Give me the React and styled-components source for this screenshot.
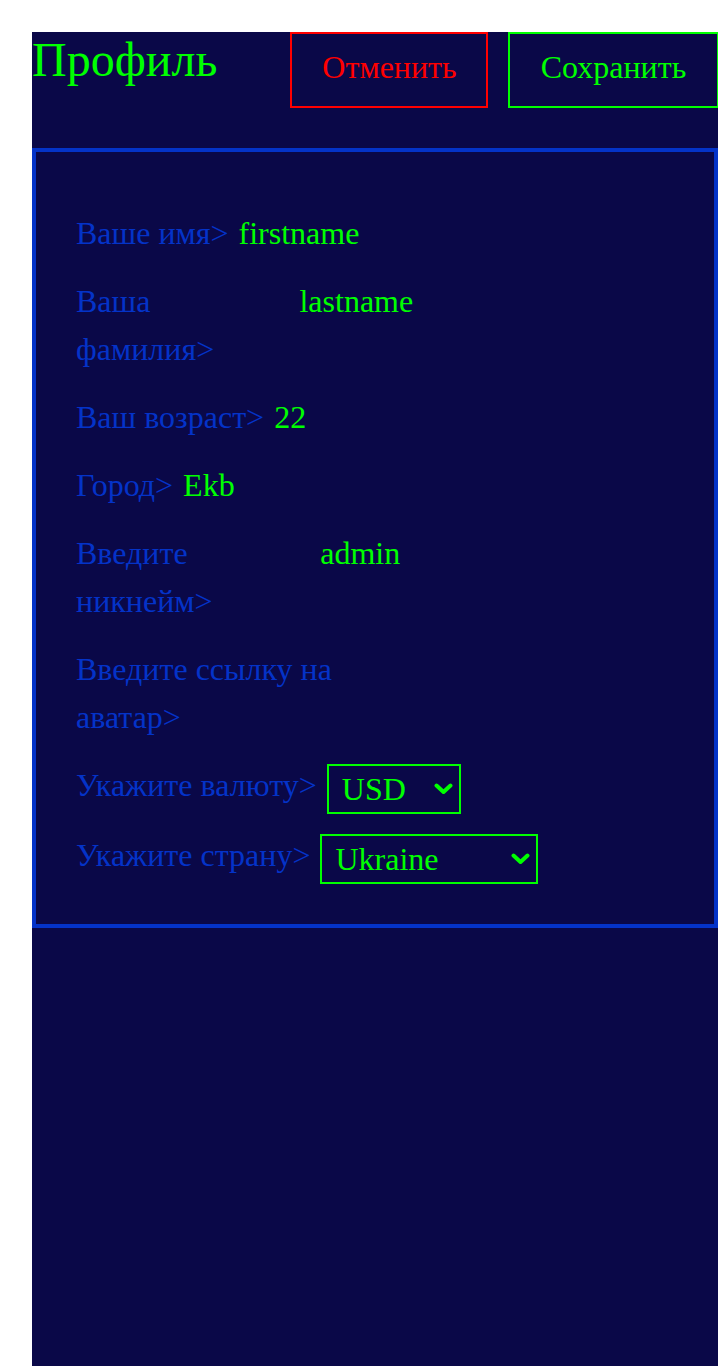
import React from "react"
import styled, { createGlobalStyle } from "styled-components"

const GlobalStyle = createGlobalStyle`
  html, body {
    margin: 0;
    padding: 0;
    background: #ffffff;
  }
  body {
    font-family: "Liberation Serif", "Times New Roman", serif;
  }
`;

const Page = styled.div`
  margin: 32px 0 0 32px;
  width: calc(100% - 32px);
  min-height: calc(100vh - 32px);
  background: #0a0848;
  box-sizing: border-box;
`;

const Header = styled.header`
  display: flex;
  align-items: flex-start;
  height: 116px;
`;

const Title = styled.h1`
  margin: 0 73px 0 0;
  font-size: 48px;
  font-weight: normal;
  color: #00ff00;
`;

const Button = styled.button`
  margin-right: 20px;
  padding: 15px 29px 21px 30px;
  font-family: inherit;
  font-size: 32px;
  line-height: 36px;
  background: transparent;
  color: ${p => p.$color};
  border: 2px solid ${p => p.$color};
  cursor: pointer;
  &:last-child {
    margin-right: 0;
    padding: 15px 31px 21px;
  }
`;

const Panel = styled.form`
  display: flex;
  flex-direction: column;
  gap: 20px;
  padding: 57px 40px 43px;
  border: 4px solid #0433c8;
  box-sizing: border-box;
`;

const Row = styled.div`
  display: flex;
  align-items: flex-start;
  gap: 10px;
  font-size: 32px;
  line-height: 48px;
`;

const Label = styled.label`
  flex: 0 1 auto;
  color: #0433c8;
`;

const Field = styled.input`
  flex: 0 1 auto;
  width: 387px;
  min-width: 0;
  padding: 0;
  border: none;
  outline: none;
  background: transparent;
  font-family: inherit;
  font-size: 32px;
  line-height: 48px;
  height: 48px;
  color: #00ff00;
`;

const SelectWrap = styled.div`
  position: relative;
  flex: 0 0 auto;
  margin: 3px 0 -3px;
  width: ${p => p.$width}px;
  height: 50px;
`;

const Select = styled.select`
  appearance: none;
  width: 100%;
  height: 100%;
  padding: 0 32px 0 13px;
  border: 2px solid #00ff00;
  border-radius: 0;
  background: #0a0848;
  color: #00ff00;
  font-family: inherit;
  font-size: 32px;
  outline: none;
`;

const Chevron = styled.svg`
  position: absolute;
  right: 8px;
  top: 19px;
  width: 19px;
  height: 12px;
  pointer-events: none;
`;

const fields = [
  { label: "Ваше имя>", value: "firstname" },
  { label: "Ваша фамилия>", value: "lastname" },
  { label: "Ваш возраст>", value: "22" },
  { label: "Город>", value: "Ekb" },
  { label: "Введите никнейм>", value: "admin" },
  { label: "Введите ссылку на аватар>", value: "" },
];

function Dropdown({ width, value, options }) {
  return (
    <SelectWrap $width={width}>
      <Select defaultValue={value}>
        {options.map(o => <option key={o}>{o}</option>)}
      </Select>
      <Chevron viewBox="0 0 19 12">
        <path d="M2.5 2.5 L9.5 9 L16.5 2.5" fill="none" stroke="#00ff00" strokeWidth="4" strokeLinecap="round" strokeLinejoin="round" />
      </Chevron>
    </SelectWrap>
  )
}

export default function App() {
  return (
    <>
      <GlobalStyle />
      <Page>
        <Header>
          <Title>Профиль</Title>
          <Button type="button" $color="#ff0000">Отменить</Button>
          <Button type="button" $color="#00ff00">Сохранить</Button>
        </Header>
        <Panel onSubmit={e => e.preventDefault()}>
          {fields.map(f => (
            <Row key={f.label}>
              <Label>{f.label}</Label>
              <Field defaultValue={f.value} />
            </Row>
          ))}
          <Row>
            <Label>Укажите валюту&gt;</Label>
            <Dropdown width={134} value="USD" options={["USD", "EUR", "RUB"]} />
          </Row>
          <Row>
            <Label>Укажите страну&gt;</Label>
            <Dropdown width={218} value="Ukraine" options={["Ukraine", "Russia", "Kazakhstan"]} />
          </Row>
        </Panel>
      </Page>
    </>
  )
}
